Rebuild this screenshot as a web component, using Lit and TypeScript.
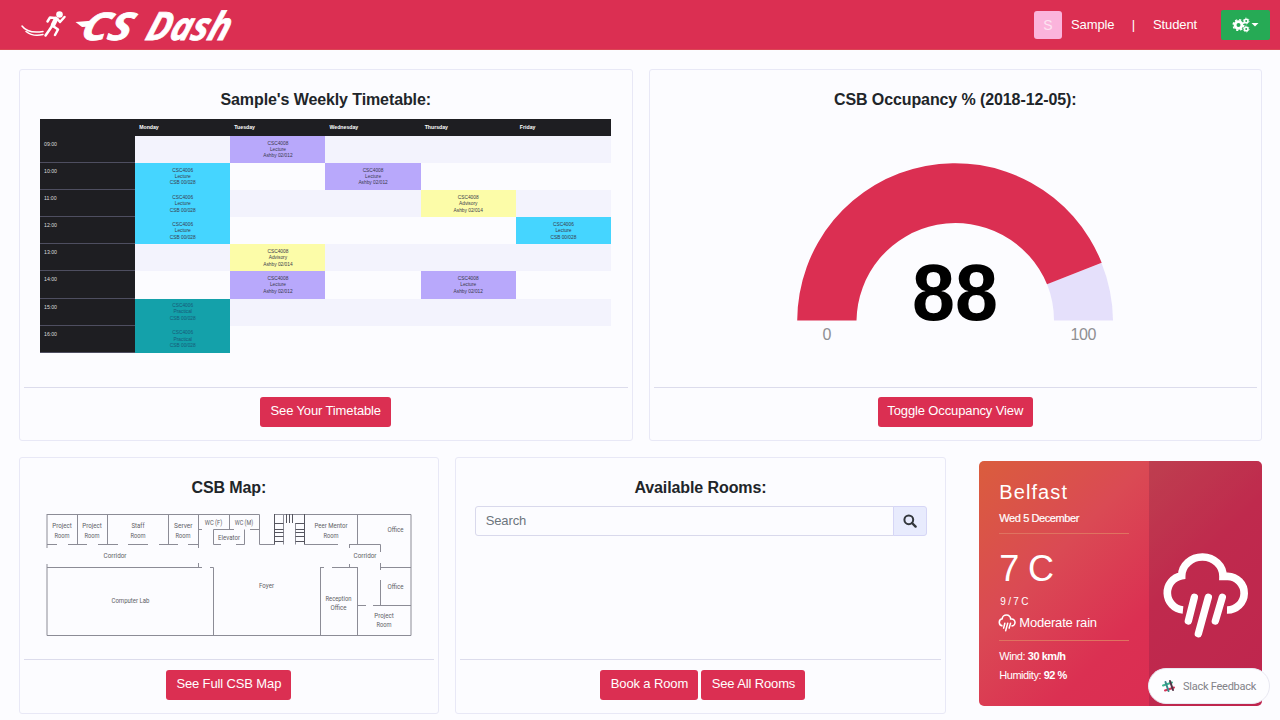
import { LitElement, html, svg, css } from "lit";
import { customElement } from "lit/decorators.js";

const DAYS = ["", "Monday", "Tuesday", "Wednesday", "Thursday", "Friday"];
const HOURS = ["09:00", "10:00", "11:00", "12:00", "13:00", "14:00", "15:00", "16:00"];

type Slot = { kind: string; lines: string[] };
const purple = (): Slot => ({ kind: "purple", lines: ["CSC4008", "Lecture", "Ashby 02/012"] });
const blue = (): Slot => ({ kind: "blue", lines: ["CSC4006", "Lecture", "CSB 00/028"] });
const yellow = (): Slot => ({ kind: "yellow", lines: ["CSC4008", "Advisory", "Ashby 02/014"] });
const teal = (): Slot => ({ kind: "teal", lines: ["CSC4006", "Practical", "CSB 00/028"] });

const SLOTS: Record<string, Slot> = {
  "0-2": purple(), "1-1": blue(), "1-3": purple(), "2-1": blue(), "2-4": yellow(),
  "3-1": blue(), "3-5": blue(), "4-2": yellow(), "5-2": purple(), "5-4": purple(),
  "6-1": teal(), "7-1": teal(),
};

const WALLS = [
  "M47 514.5H259.5V544.5H274.5", "M47 514V548M47 564V635.5H411V514.5H274.5V544.5",
  "M77.5 514V544.5M107.5 514V544.5M168.5 514V544.5M198.5 514V548M198.5 563V567.5",
  "M47 544.5H57M68 544.5H87M98 544.5H118M128 544.5H148M159 544.5H178M188 544.5H198.5",
  "M229.5 514V529.5M198.5 529.5H202M213.5 529.5H234M250 529.5H259.5",
  "M213.5 529.5V544.5H221M236 544.5H244.5V529.5",
  "M305 544.5H338M349 544.5H380.5V552M357.5 514V544.5M349.5 544.5V548M349.5 564V567.5",
  "M320 567.5H324M332 567.5H358M320.5 567.5V635M357.5 567.5V635",
  "M380.5 563V570M380.5 580V605M380.5 567.5H411M357.5 605.5H366M373 605.5H411",
  "M47 567.5H202M210 567.5H213.5V635",
  "M283.5 514V544.5M295.5 523V544.5M304.5 514V544.5",
];

const STAIRS =
  "M274 523.5H283.5M274 529.5H283.5M274 532.5H283.5M274 536.5H283.5M274 541.5H283.5M295.5 523.5H304.5M295.5 529.5H304.5M295.5 532.5H304.5M295.5 536.5H304.5M295.5 541.5H304.5M286.5 514V523M289.5 514V523M292.5 514V523M274.5 514V544.5M304.5 514V544.5";

const LABELS: [string, number, number, number][] = [
  ["Project", 62, 528, 19.5], ["Room", 62, 537.5, 15],
  ["Project", 92, 528, 19.5], ["Room", 92, 537.5, 15],
  ["Staff", 138, 528, 13], ["Room", 138, 537.5, 15],
  ["Server", 183.3, 528, 18.5], ["Room", 183, 537.5, 15],
  ["WC (F)", 213.5, 524.5, 17.5], ["WC (M)", 244, 524.5, 18.5],
  ["Elevator", 229, 540, 22], ["Peer Mentor", 331, 528, 33], ["Room", 331, 537.5, 15],
  ["Office", 395.5, 531.5, 16], ["Corridor", 115, 557.5, 23], ["Corridor", 365, 557.5, 23],
  ["Computer Lab", 130.5, 603, 38], ["Foyer", 266.5, 588, 15],
  ["Reception", 338.5, 600.5, 26], ["Office", 338.5, 610, 16],
  ["Office", 395.5, 589, 16], ["Project", 384, 617.5, 19.5], ["Room", 384, 627, 15],
];

const rainIcon = (cls: string) => html`
  <svg class=${cls} viewBox="590 308 264 258" fill="none" stroke="#fff">
    <path stroke-width="23" d="M656 479A52 52 0 0 1 652 376A62 57 0 0 1 776 378H790A50.500 50.500 0 0 1 788 479" />
    <path stroke-width="22" stroke-linecap="round" d="M690 441L672 512M732 441L702 550M774 441L753 512" />
  </svg>`;

@customElement("app-root")
export class AppRoot extends LitElement {
  static styles = css`
    :host {
      display: block;
      width: 1280px;
      height: 720px;
      overflow: hidden;
      position: relative;
      background: #fcfcff;
      color: #212529;
      font-family: "Liberation Sans", Arial, sans-serif;
      font-size: 13px;
    }
    * { box-sizing: border-box; }
    .nav {
      height: 50px;
      background: #db2f52;
      border-bottom: 1px solid #dc4554;
      display: flex;
      align-items: flex-start;
      padding: 0 10px 0 20px;
      color: #fff;
    }
    .logo { width: 230px; height: 60px; display: block; flex: none; }
    .word { font-family: "Open Sans", sans-serif; font-weight: 700; font-style: italic; fill: #fff; stroke: #fff; stroke-width: 0.8px; }
    .user { margin-left: auto; display: flex; align-items: center; height: 49px; }
    .avatar {
      width: 28px;
      height: 28px;
      border-radius: 3px;
      background: #fbb4dc;
      color: #fde3f2;
      display: grid;
      place-items: center;
      font-size: 14px;
      margin-right: 9px;
    }
    .name { width: 43px; letter-spacing: -0.1px; }
    .sep { width: 39px; text-align: center; }
    .role { width: 44px; letter-spacing: -0.1px; }
    .cogs {
      width: 49px;
      height: 30px;
      margin-left: 24px;
      border-radius: 2px;
      background: #26aa55;
      display: grid;
      place-items: center;
    }
    .row { display: flex; }
    .top { padding: 19px 18px 0 19px; gap: 16px; }
    .bottom { padding: 16px 18px 0 19px; }
    .card {
      border: 1px solid #e8e8f6;
      border-radius: 3px;
      display: flex;
      flex-direction: column;
      align-items: center;
    }
    .top .card { width: 614px; height: 372px; }
    .bottom .card { height: 257px; }
    .map { width: 420px; }
    .rooms { width: 492px; margin-left: 16px; }
    .title { font-size: 16px; font-weight: bold; line-height: 20px; margin-top: 20px; letter-spacing: -0.1px; }
    .body { flex: 1; min-height: 0; width: 100%; }
    .foot {
      align-self: stretch;
      margin: 0 4px;
      border-top: 1px solid #dcdcec;
      height: 53px;
      display: flex;
      justify-content: center;
      gap: 3px;
      padding-top: 9px;
    }
    .bottom .foot { height: 54px; padding-top: 10px; }
    .btn {
      height: 30px;
      border-radius: 3px;
      background: #db2f52;
      color: #fff;
      font: 13px/28px "Liberation Sans", Arial, sans-serif;
      letter-spacing: -0.13px;
      border: 0;
      padding: 0 0 2px;
      text-align: center;
      white-space: nowrap;
    }
    .w131 { width: 131px; } .w155 { width: 155px; } .w125 { width: 125px; }
    .w98 { width: 98px; margin-left: 5px; } .w104 { width: 104px; }
    .table {
      margin: 9px 0 0 20px;
      width: 571px;
      display: grid;
      grid-template-columns: repeat(6, 1fr);
      grid-template-rows: 17px repeat(8, 27.1px);
      font-size: 4.8px;
    }
    .head { background: #1e1e22; color: #fff; font-weight: bold; font-size: 5.2px; line-height: 17px; padding-left: 4px; }
    .hour { background: #1e1e22; color: #ddd; font-size: 5.2px; line-height: 6px; padding: 5px 0 0 4px; border-bottom: 1px solid #4e4e60; }
    .cell { text-align: center; line-height: 6.4px; padding-top: 4.500px; color: #3a3a4c; }
    .odd { background: #f3f3fd; }
    .purple { background: #b8a8fb; }
    .blue { background: #45d5ff; }
    .yellow { background: #fcfca8; }
    .teal { background: #14a1aa; color: #185a78; }
    .gauge { display: block; width: 360px; height: 200px; margin: 40px auto 0; }
    .num { font-size: 79px; font-weight: bold; fill: #000; }
    .lim { font-size: 16px; fill: #8f8f92; }
    .plan { display: block; width: 380px; height: 140px; margin: 7px 0 0 20px; }
    .label { font-family: Roboto, sans-serif; font-size: 8px; fill: #5e5e66; }
    .search { display: flex; width: 452px; height: 30px; margin: 8px 0 0 19px; }
    .input {
      flex: 1;
      border: 1px solid #d9d9ec;
      border-radius: 3px 0 0 3px;
      line-height: 28px;
      padding-left: 10px;
      color: #6c757d;
      letter-spacing: -0.1px;
    }
    .go { width: 34px; border: 1px solid #d6d6f6; border-radius: 0 3px 3px 0; margin-left: -1px; background: #e8ebfd; display: grid; place-items: center; }
    .weather {
      width: 283px;
      height: 245px;
      margin: 4px 0 0 33px;
      border-radius: 5px;
      display: flex;
      color: #fff;
      overflow: hidden;
      background: linear-gradient(135deg, #da5d3d 0%, #da4a54 32%, #db3052 60%, #db2a53 100%);
    }
    .info { width: 170px; padding: 0 20px; display: flex; flex-direction: column; }
    .city { font-size: 20px; line-height: 24px; letter-spacing: 1.1px; margin-top: 19px; }
    .date { font-size: 11px; line-height: 14px; margin-top: 7px; letter-spacing: -0.4px; -webkit-text-stroke: 0.2px #fff; }
    .line { height: 1px; background: #df7360; margin-top: 8px; }
    .temp { font-size: 36px; line-height: 40px; margin-top: 15px; letter-spacing: -0.6px; }
    .range { font-size: 10px; line-height: 12px; margin: 7px 0 0 1px; letter-spacing: -0.2px; }
    .cond { font-size: 13px; line-height: 16px; display: flex; align-items: center; gap: 3px; margin: 6px 0 0 -1px; letter-spacing: -0.2px; height: 18px; }
    .small { width: 18px; height: 18px; }
    .l2 { margin-top: 8px; }
    .stat { font-size: 11px; line-height: 14px; margin-top: 8px; white-space: nowrap; letter-spacing: -0.45px; }
    .stat + .stat { margin-top: 5px; }
    .side { flex: 1; background: rgba(80, 20, 60, 0.2); padding: 92px 0 0 12px; }
    .large { display: block; width: 88px; height: 86px; }
    .slack {
      position: absolute;
      left: 1148px;
      top: 668px;
      width: 122px;
      height: 36px;
      border-radius: 18px;
      background: #fdfdff;
      border: 1px solid #e9e9f2;
      display: flex;
      align-items: center;
      gap: 7px;
      padding-left: 12px;
      font: 11px Roboto, sans-serif;
      letter-spacing: -0.25px;
      color: #828288;
      white-space: nowrap;
    }
  `;

  private table() {
    return html`<div class="table">
      ${DAYS.map((d) => html`<div class="head">${d}</div>`)}
      ${HOURS.map((h, r) => html`<div class="hour">${h}</div>
        ${[1, 2, 3, 4, 5].map((c) => {
          const s = SLOTS[`${r}-${c}`];
          return html`<div class="cell ${s ? s.kind : r % 2 ? "" : "odd"}">
            ${s ? s.lines.map((l) => html`<div>${l}</div>`) : ""}
          </div>`;
        })}`)}
    </div>`;
  }

  render() {
    return html`
      <div class="nav">
        <svg class="logo" viewBox="20 0 230 60">
          <g fill="none" stroke="#fff" stroke-linecap="round" stroke-linejoin="round">
            <path stroke-width="1.500" d="M22 26Q28 34 43 31.500M26 31.500Q33 37 43 34.500" />
            <path stroke-width="4.600" d="M56 19L53 25" />
            <path stroke-width="2.500" d="M55 18L50 17.500L47.500 21.500M57.500 19L60 22L64.500 17M52 26L49 30.500L45.500 35.500M53 26L58 29.500L55 35" />
          </g>
          <circle cx="59.500" cy="14.500" r="3.300" fill="#fff" />
          <path fill="#fff" d="M75.500 22L94 20.500L92 26.500L82 27Z" />
          <g transform="translate(0 39.500) skewX(-18)">
            <text class="word" x="79" y="0" font-size="38" textLength="50" lengthAdjust="spacingAndGlyphs">CS</text>
            <text class="word" x="144" y="0" font-size="39" textLength="83" lengthAdjust="spacingAndGlyphs">Dash</text>
          </g>
        </svg>
        <div class="user">
          <div class="avatar">S</div>
          <span class="name">Sample</span><span class="sep">|</span><span class="role">Student</span>
          <div class="cogs">
            <svg width="28" height="16" viewBox="0 0 28 16">
              <g fill="none" stroke="#fff">
                <circle cx="6.500" cy="8" r="3.400" stroke-width="2.800" />
                <circle cx="6.500" cy="8" r="5.300" stroke-width="1.500" stroke-dasharray="2.200 1.963" />
                <circle cx="14.200" cy="4" r="1.800" stroke-width="1.600" />
                <circle cx="14.200" cy="4" r="2.900" stroke-width="0.800" stroke-dasharray="1.500 1.537" />
                <circle cx="14.200" cy="12" r="1.800" stroke-width="1.600" />
                <circle cx="14.200" cy="12" r="2.900" stroke-width="0.800" stroke-dasharray="1.500 1.537" />
              </g>
              <path fill="#fff" d="M19.500 6H26.500L23 9.500Z" />
            </svg>
          </div>
        </div>
      </div>

      <div class="row top">
        <div class="card">
          <div class="title">Sample's Weekly Timetable:</div>
          <div class="body">${this.table()}</div>
          <div class="foot"><button class="btn w131">See Your Timetable</button></div>
        </div>
        <div class="card">
          <div class="title">CSB Occupancy % (2018-12-05):</div>
          <div class="body">
            <svg class="gauge" viewBox="775 150 360 200">
              <path fill="#e5e0fb" d="M1101.500 263A158 158 0 0 1 1113 320.500H1054A99 99 0 0 0 1047 284Z" />
              <path fill="#db2f52" d="M797.200 320.500A157.800 157.800 0 0 1 1101.700 262.800L1047 284.300A99 99 0 0 0 856.500 320.500Z" />
              <text class="num" x="955" y="320" text-anchor="middle" textLength="86" lengthAdjust="spacingAndGlyphs">88</text>
              <text class="lim" x="827" y="340" text-anchor="middle">0</text>
              <text class="lim" x="1083.500" y="340" text-anchor="middle" textLength="26">100</text>
            </svg>
          </div>
          <div class="foot"><button class="btn w155">Toggle Occupancy View</button></div>
        </div>
      </div>

      <div class="row bottom">
        <div class="card map">
          <div class="title">CSB Map:</div>
          <div class="body">
            <svg class="plan" viewBox="40 505 380 140">
              <path d=${WALLS.join("")} fill="none" stroke="#8c8c96" stroke-width="1" />
              <path d=${STAIRS} fill="none" stroke="#55555f" stroke-width="1" />
              ${LABELS.map(([t, x, y, w]) => svg`<text class="label" x=${x - w / 2} y=${y} textLength=${w} lengthAdjust="spacingAndGlyphs">${t}</text>`)}
            </svg>
          </div>
          <div class="foot"><button class="btn w125">See Full CSB Map</button></div>
        </div>
        <div class="card rooms">
          <div class="title">Available Rooms:</div>
          <div class="body">
            <div class="search">
              <div class="input">Search</div>
              <div class="go">
                <svg width="14" height="14" viewBox="0 0 14 14" fill="none" stroke="#33373c">
                  <circle cx="5.800" cy="5.800" r="4.400" stroke-width="2" />
                  <path d="M9 9L12.600 12.600" stroke-width="2.400" stroke-linecap="round" />
                </svg>
              </div>
            </div>
          </div>
          <div class="foot">
            <button class="btn w98">Book a Room</button><button class="btn w104">See All Rooms</button>
          </div>
        </div>
        <div class="weather">
          <div class="info">
            <div class="city">Belfast</div>
            <div class="date">Wed 5 December</div>
            <div class="line"></div>
            <div class="temp">7 C</div>
            <div class="range">9 / 7 C</div>
            <div class="cond">${rainIcon("small")}<span>Moderate rain</span></div>
            <div class="line l2"></div>
            <div class="stat">Wind: <b>30 km/h</b></div>
            <div class="stat">Humidity: <b>92 %</b></div>
          </div>
          <div class="side">${rainIcon("large")}</div>
        </div>
      </div>

      <div class="slack">
        <svg width="15" height="15" viewBox="0 0 15 15" fill="none" stroke-width="2" stroke-linecap="round">
          <path stroke="#3eb991" d="M2 6.500L11 3.500" />
          <path stroke="#d5365a" d="M4 11.500L13 8.500" />
          <path stroke="#3c8a8c" d="M4.500 3L7.500 12" />
          <path stroke="#533447" d="M9 2L12 11" />
        </svg>
        <span>Slack Feedback</span>
      </div>
    `;
  }
}
